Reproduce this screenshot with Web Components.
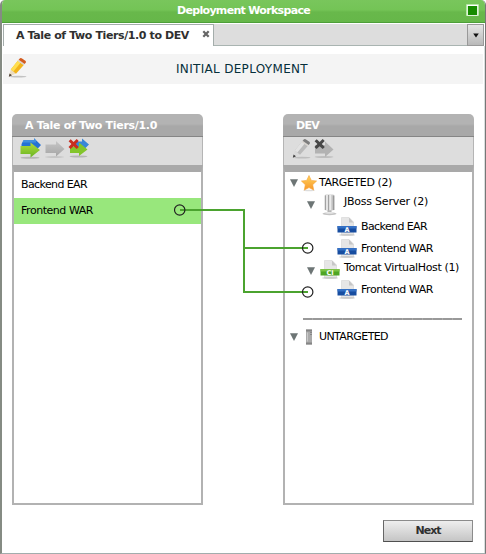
<!DOCTYPE html>
<html lang="en"><head><meta charset="utf-8"><title>Deployment Workspace</title>
<style>html,body{margin:0;height:100%;overflow:hidden;background:#fff}body{font:11px/14px "DejaVu Sans",sans-serif;color:#000}</style></head>
<body><deployment-window></deployment-window>
<script>
const define=(name,markup,setup)=>customElements.define(name,class extends HTMLElement{
  constructor(){super();this.attachShadow({mode:'open'}).innerHTML=markup;}
  connectedCallback(){if(setup)setup(this,this.shadowRoot);}
});

// Single-line label whose tracking is adjusted to fill the width in its "w" attribute.
define('ui-label',`<style>:host{display:block;white-space:nowrap;line-height:14px}span{display:inline-block}</style><span><slot></slot></span>`,(el,root)=>{
  const s=root.querySelector('span'),w=+el.getAttribute('w');
  requestAnimationFrame(()=>{s.style.letterSpacing='0';const n=s.getBoundingClientRect().width;if(n)s.style.letterSpacing=((w-n)/el.textContent.length)+'px';});
});

const page=(c1,c2,t)=>`<path d="M4.500 -.5h7.500l4.500 4.500V17H4.500z" fill="#e6e6e6" stroke="#d4d4d4" stroke-width=".6"/><path d="M12-.5V4.500h4.500z" fill="#c6c6c6"/><ellipse cx="10" cy="17" rx="8" ry="1" fill="#bbb" opacity=".6"/><path d="M.5 8h19v6.500H.5z" fill="${c1}"/><path d="M.5 8h19v2.500H.5z" fill="${c2}"/><text x="10" y="13.700" font-size="6.500" font-weight="bold" font-family="DejaVu Sans,sans-serif" text-anchor="middle" fill="#fff">${t}</text>`;
const pencil=(w,b,e,tip,m)=>`<ellipse cx="10" cy="18.700" rx="8.500" ry=".9" fill="#b5b5b5" opacity=".8"/><path d="M.8 18.800 2.800 11.500 8 15.500z" fill="${m}"/><path d="M.8 18.800 1.600 15.500 4 17.300z" fill="${tip}"/><path d="M2.800 11.500 10 2.500l6 4.200L8 15.800z" fill="${w}"/><path d="M2.800 11.500 10 2.500l2.800 2L5.400 13.600z" fill="${b}"/><path d="M9.600 3 10.600 1.800 16.700 6l-1 1.300z" fill="#d9d5d0"/><path d="M10.600 1.800 12 .3Q12.800-.2 13.600.2L17.400 2.800Q18.300 3.500 17.800 4.500L16.700 6z" fill="${e}"/>`;
const cross='M.6 2.200 2.700.2 5.600 2.900 8.700 0l2 2L7.800 5l3 3-2.100 2L5.600 7.200 2.600 10 .5 8 3.400 5z';
const icons={
 pencil:[19,20,pencil('#f2b41c','#ffdf50','#d45c20','#453a30','#eadbc0')],
 pencilOff:[19,20,pencil('#bababa','#e2e2e2','#7d7d7d','#3c3c3c','#d9d9d9')],
 add:[22,20,`<defs><linearGradient id="g" x2="0" y2="1"><stop stop-color="#b1dc3d"/><stop offset="1" stop-color="#69b522"/></linearGradient></defs><path d="M3.500 1.300h10.500V-.7l7 6.700-5 5.500H1.500V5z" fill="#2472d5"/><path d="M3.500 1.300h10.500V-.7l2 2v2.200H2.500z" fill="#4090e0"/><ellipse cx="10" cy="18.700" rx="9.500" ry="1" fill="#b5b5b5"/><path d="M.5 7h10V3.500L20 11l-9.500 7.500V15H.5z" fill="url(#g)"/>`],
 arrowOff:[22,20,`<defs><linearGradient id="g" x2="0" y2="1"><stop stop-color="#c6c6c6"/><stop offset="1" stop-color="#a5a5a5"/></linearGradient></defs><ellipse cx="9.500" cy="18" rx="9.500" ry=".8" fill="#bebebe"/><path d="M.5 5.500h10.500V2l8.500 8-8.500 7.500V14H.5z" fill="url(#g)"/>`],
 remove:[22,20,`<path d="M8 2.500h6V-.5L21 5.500l-5 5H8z" fill="#3987d8"/><ellipse cx="10.500" cy="17.500" rx="9" ry=".9" fill="#b5b5b5"/><path d="M2 7.500h9V3.500l8.500 7-8.500 6.500V14H2z" fill="#83c52b"/><path d="${cross}" fill="#c72d20"/>`],
 removeOff:[22,20,`<ellipse cx="10" cy="18" rx="9.500" ry=".9" fill="#bebebe"/><path d="M1 6h10V2.500l8.500 8L11 18V14.500H1z" fill="#b2b2b2"/><path d="${cross}" fill="#474747"/>`],
 star:[16,16,`<defs><linearGradient id="g" x2="0" y2="1"><stop stop-color="#ffd45c"/><stop offset="1" stop-color="#f8962a"/></linearGradient></defs><ellipse cx="8" cy="15.500" rx="6" ry=".7" fill="#ddd"/><path d="M8 .5 10.300 5.400l5.300.6-3.900 3.700 1 5.400L8 12.600l-4.700 2.500 1-5.400L.4 6l5.300-.6z" fill="url(#g)" stroke="#f6a336" stroke-width=".6"/>`],
 server:[15,22,`<ellipse cx="7.500" cy="19.700" rx="7" ry="1.500" fill="#c3c3c3"/><path d="M5.500 16h4v3h-4z" fill="#aaa"/><ellipse cx="7.500" cy="18.700" rx="4.500" ry="1" fill="#e6e6e6"/><path d="M2.500 2Q2.500.5 4 .5h7q1.500 0 1.500 1.500V16q-5 1.500-10 0z" fill="#d0d0d0"/><path d="M3.500 1.500v14.500M6.500 1v15.500" stroke="#a2a2a2"/><path d="M5 1v15M8.200 1v15" stroke="#f0f0f0" stroke-width="1.300"/><path d="M11.500 1.500V16" stroke="#999" stroke-width="1.500"/>`],
 blueDoc:[20,18,page('#174da0','#3470c4','A')],
 greenDoc:[20,18,page('#4fa525','#7ac243','CI')],
 stub:[8,17,`<path d="M1 .5h6v15H1z" fill="#aaa"/><path d="M1 .5h6v2H1zM1 13.500h6v2H1z" fill="#858585"/><path d="M2.500 3.500v9" stroke="#c9c9c9"/><path d="M5 3.500h2M5 5.500h2" stroke="#777" stroke-width=".7"/>`],
 twisty:[8,8,`<path d="M0 .3h8L4 8z" fill="#6d7575"/>`],
 close:[8,8,`<path d="M1.300 1.200 6.700 6.800M6.700 1.200 1.300 6.800" stroke="#666" stroke-width="2.200"/>`],
 down:[6,5,`<path d="M.2.500h5.600L3 4.500z" fill="#111"/>`],
 maximize:[13,13,`<path d="M.5.500h12v11H.5z" fill="#93d27c" stroke="#b9e5aa"/><path d="M2 2h9v9H2z" fill="#178c00"/><path d="M1 1.500h11" stroke="#fff"/><path d="M1.500 2v9.500h10V2" fill="none" stroke="#dff3d8"/>`]
};
define('ui-icon',`<style>:host{display:block;flex:none}svg{display:block;overflow:visible}</style><div></div>`,(el,root)=>{
  const [w,h,b]=icons[el.getAttribute('name')];
  root.querySelector('div').innerHTML=`<svg width="${w}" height="${h}" viewBox="0 0 ${w} ${h}">${b}</svg>`;
});

define('ui-panel',`<style>:host{display:flex;flex-direction:column;box-sizing:border-box;width:191px;height:391px}
header{height:23px;box-sizing:border-box;border-bottom:1px solid #858585;border-radius:5px 5px 0 0;background:linear-gradient(#b3b3b3 0 45%,#a8a8a8 55%);color:#fff;font-weight:bold;padding:4.500px 0 0 13px}
nav{box-sizing:border-box;height:28px;display:flex;gap:2px;padding:2px 8px;background:#ddd;border-left:1px solid #b5b5b5;border-right:1px solid #b5b5b5}
main{flex:1;border:solid #b2b2b2;border-width:7px 2px 2px;border-top-color:#a9a9a9;background:#fff}</style>
<header><slot name="title"></slot></header><nav><slot name="tools"></slot></nav><main><slot></slot></main>`);

define('list-row',`<style>:host{display:flex;align-items:center;height:26px;padding-left:7px;box-sizing:border-box}:host([selected]){background:#98e77c}</style><slot></slot>`);

define('tree-row',`<style>:host{display:grid;grid-template-columns:8px auto 1fr;align-items:center;box-sizing:border-box}</style><slot></slot>`);

define('workspace-tabs',`<style>:host{display:flex;height:22px;box-sizing:border-box;background:#ddd;border-bottom:1px solid #a9b4b1}
.tab{box-sizing:border-box;width:211px;height:22px;padding:4px 3px 0 12px;background:#fff;border:1px solid #a4adab;border-bottom:0;display:flex;justify-content:space-between;font-weight:bold;color:#303030}
.tab ui-icon{margin-top:1px}.more{margin-left:auto;box-sizing:border-box;width:17px;height:22px;border:1px solid #999;background:linear-gradient(#e5e5e5,#b9b9b9);display:grid;place-items:center}</style>
<div class="tab"><ui-label w="173">A Tale of Two Tiers/1.0 to DEV</ui-label><ui-icon name="close"></ui-icon></div><div class="more"><ui-icon name="down"></ui-icon></div>`);

define('ui-button',`<style>:host{display:grid;place-items:center;box-sizing:border-box;width:90px;height:22px;border:1px solid #8b8b8b;border-bottom-color:#505050;border-left-color:#666;background:linear-gradient(#eee,#c5c5c5);font-weight:bold;color:#303030}</style><slot></slot>`);

define('deployment-window',`<style>
:host{display:flex;flex-direction:column;box-sizing:border-box;width:486px;height:554px;position:relative;border-left:2px solid #858b83;border-right:1px solid #777;border-bottom:1px solid #a2adad;border-radius:5px 5px 0 0;background:#fff;overflow:hidden}
.bar{flex:none;height:23px;box-sizing:border-box;margin-left:-2px;border-bottom:1px solid #4d9f39;background:linear-gradient(#79c65c,#74c456 45%,#68b84b 55%,#66b749);display:grid;grid-template-columns:177px 1fr auto;padding-right:6px;color:#fff;font-weight:bold}
.bar ui-label{grid-column:2;margin-top:4px}.bar ui-icon{margin-top:4px}
workspace-tabs{margin:1px 1px 0 1px;flex:none}
.body{flex:1;display:flex;flex-direction:column;padding:8px 1px 0;border-right:1px solid #d9dfdf}
.band{height:30px;display:flex;background:#f4f4f4;color:#062f3b;font-size:12px}.band ui-icon{margin:4px 0 0 5px}.band ui-label{margin:8px 0 0 149px}
.panels{display:flex;gap:80px;margin:30px 0 0 9px}
.tree{display:flex;flex-direction:column;padding:1px 5px}
.rule{height:2px;background:repeating-linear-gradient(90deg,#999 0 9px,#aaa 9px 10px);width:159px;margin:19px 0 7px 13px}
.wires{position:absolute;left:-2px;top:0;pointer-events:none}
ui-button{margin:15px 10px 0 auto}
</style>
<div class="bar"><ui-label w="133">Deployment Workspace</ui-label><ui-icon name="maximize"></ui-icon></div>
<workspace-tabs></workspace-tabs>
<div class="body">
 <div class="band"><ui-icon name="pencil"></ui-icon><ui-label w="132">INITIAL DEPLOYMENT</ui-label></div>
 <div class="panels">
  <ui-panel><ui-label slot="title" w="132">A Tale of Two Tiers/1.0</ui-label>
   <ui-icon slot="tools" name="add" style="margin-left:-1px"></ui-icon><ui-icon slot="tools" name="arrowOff" style="margin-left:1px"></ui-icon><ui-icon slot="tools" name="remove" style="margin-left:-1px"></ui-icon>
   <div class="list"><list-row><ui-label w="66">Backend EAR</ui-label></list-row><list-row selected><ui-label w="72">Frontend WAR</ui-label></list-row></div>
  </ui-panel>
  <ui-panel><ui-label slot="title" w="23">DEV</ui-label>
   <ui-icon slot="tools" name="pencilOff"></ui-icon><ui-icon slot="tools" name="removeOff" style="margin-left:1px"></ui-icon>
   <div class="tree">
    <tree-row style="height:20px"><ui-icon name="twisty"></ui-icon><ui-icon name="star" style="margin-left:3px"></ui-icon><ui-label w="73" style="margin-left:2px;margin-bottom:1px">TARGETED (2)</ui-label></tree-row>
    <tree-row style="height:23px;padding-left:17px"><ui-icon name="twisty"></ui-icon><ui-icon name="server" style="margin-left:7px"></ui-icon><ui-label w="84" style="margin-left:7px;margin-bottom:6px">JBoss Server (2)</ui-label></tree-row>
    <tree-row style="height:22px;padding-left:39px"><span></span><ui-icon name="blueDoc"></ui-icon><ui-label w="66" style="margin-left:4px">Backend EAR</ui-label></tree-row>
    <tree-row style="height:22px;padding-left:39px"><span></span><ui-icon name="blueDoc"></ui-icon><ui-label w="72" style="margin-left:4px">Frontend WAR</ui-label></tree-row>
    <tree-row style="height:20px;padding-left:17px"><ui-icon name="twisty" style="margin-top:2px"></ui-icon><ui-icon name="greenDoc" style="margin-left:5px"></ui-icon><ui-label w="115" style="margin-left:4px;margin-bottom:4px">Tomcat VirtualHost (1)</ui-label></tree-row>
    <tree-row style="height:19px;padding-left:39px"><span></span><ui-icon name="blueDoc"></ui-icon><ui-label w="72" style="margin-left:4px">Frontend WAR</ui-label></tree-row>
    <div class="rule"></div>
    <tree-row style="height:20px"><ui-icon name="twisty"></ui-icon><ui-icon name="stub" style="margin-left:7px"></ui-icon><ui-label w="69" style="margin-left:6px;margin-bottom:1px">UNTARGETED</ui-label></tree-row>
   </div>
  </ui-panel>
 </div>
 <ui-button><ui-label w="25">Next</ui-label></ui-button>
</div>
<svg class="wires" width="486" height="554" fill="none"><path d="M180 210H244V292H308M244 248H308" stroke="#4ba32f" stroke-width="2"/><g stroke="#222" stroke-width="1.200"><circle cx="179.700" cy="210" r="5.200"/><circle cx="307.700" cy="248" r="5.200"/><circle cx="307.700" cy="292" r="5.200"/></g></svg>`);
</script></body></html>
